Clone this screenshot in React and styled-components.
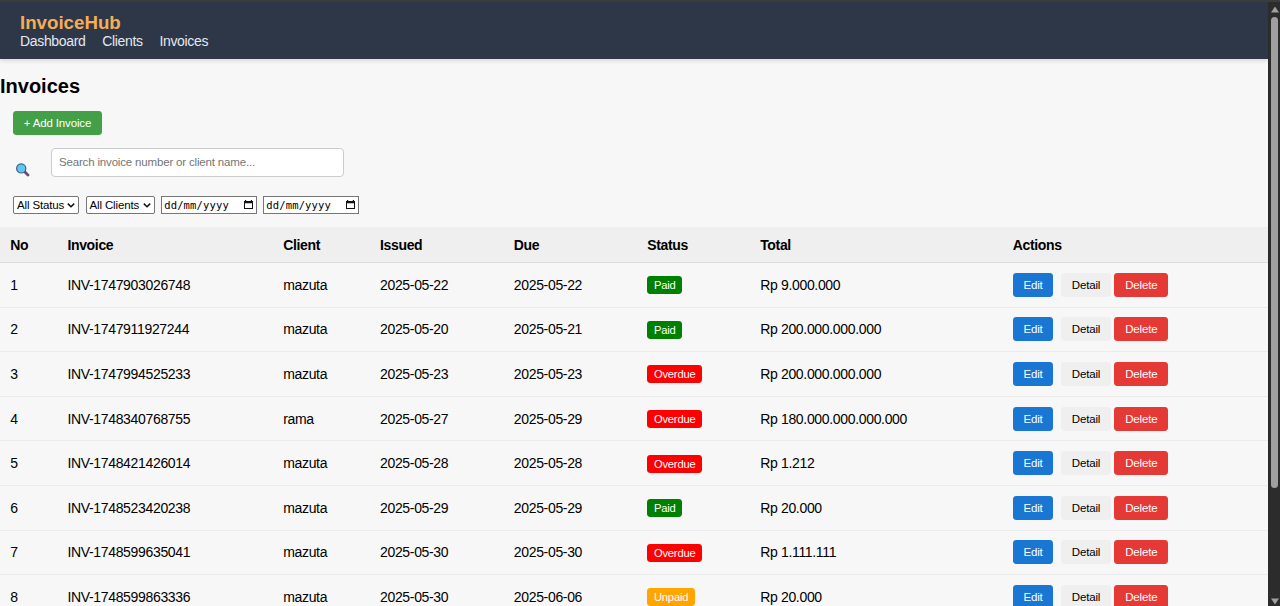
import React from "react";
import styled, { createGlobalStyle } from "styled-components";

const GlobalStyle = createGlobalStyle`
  * { box-sizing: border-box; }
  html, body { margin: 0; padding: 0; overflow: hidden; }
  body {
    font-family: "Liberation Sans", Arial, sans-serif;
    font-size: 14px;
    letter-spacing: -0.33px;
    color: #000;
    background: #f7f7f7;
  }
  button, input { font-family: inherit; }
`;

const Window = styled.div`
  display: flex;
  height: 606px;
  border-top: 2px solid #3c3c3c;
  overflow: hidden;
`;

const Page = styled.div`
  width: 1268px;
  flex: none;
  overflow: hidden;
  background: #f7f7f7;
`;

const Navbar = styled.header`
  height: 57px;
  padding: 10px 20px 0;
  background: #2d3748;
  box-shadow: 0 2px 4px rgba(0, 0, 0, 0.12);
`;

const Brand = styled.div`
  height: 21px;
  line-height: 21px;
  font-size: 18.7px;
  letter-spacing: 0;
  font-weight: bold;
  color: #f6ad55;
`;

const NavLinks = styled.nav`
  display: flex;
  gap: 16.7px;
  line-height: 16px;
`;

const NavLink = styled.a`
  color: #e2e8f0;
`;

const Title = styled.h2`
  margin: 16px 0 0;
  line-height: 23px;
  font-size: 20px;
  letter-spacing: 0;
`;

const Toolbar = styled.div`
  padding: 13px 13px 0;
  height: 129px;
`;

const variants = {
  add: "background: #43a047; color: #fff;",
  edit: "background: #1976d2; color: #fff; margin-right: 8px;",
  detail: "background: #efefef; color: #000; margin-right: 3.6px;",
  delete: "background: #e53935; color: #fff;",
};

const Button = styled.button`
  display: block;
  flex: none;
  width: ${(p) => p.$width}px;
  height: 24px;
  padding: 0;
  border: 0;
  border-radius: 3.4px;
  font-size: 11.5px;
  letter-spacing: -0.15px;
  line-height: 24px;
  text-align: center;
  ${(p) => variants[p.$kind]}
`;

const SearchRow = styled.div`
  display: flex;
  margin-top: 13px;
`;

const SearchIcon = styled.svg`
  width: 14px;
  height: 14px;
  margin: 15px 21px 0 3px;
`;

const SearchInput = styled.input`
  width: 293px;
  height: 29px;
  padding: 0 7px 1px;
  border: 1px solid #ccc;
  border-radius: 4px;
  background: #fff;
  font-size: 11.5px;
  letter-spacing: -0.17px;
  outline: none;
  &::placeholder { color: #757575; }
`;

const Filters = styled.div`
  display: flex;
  gap: 6.6px;
  margin-top: 19px;
`;

const Field = styled.div`
  display: flex;
  align-items: center;
  justify-content: space-between;
  width: ${(p) => p.$width}px;
  height: 18px;
  padding: 0 3px ${(p) => (p.$date ? 0 : 1)}px;
  border: 1px solid #767676;
  border-radius: ${(p) => (p.$date ? 0 : 2)}px;
  background: #fff;
  white-space: nowrap;
  font-family: ${(p) => (p.$date ? '"DejaVu Sans Mono", monospace' : "inherit")};
  font-size: ${(p) => (p.$date ? 10.5 : 11.5)}px;
  letter-spacing: ${(p) => (p.$date ? 0.15 : -0.15)}px;
  text-indent: ${(p) => (p.$date ? -1 : 0)}px;
  svg { flex: none; }
`;

const Table = styled.div`
  width: 1268px;
`;

const Row = styled.div`
  display: grid;
  grid-template-columns: 57.2px 215.8px 96.8px 133.8px 133.4px 113px 252.5px 1fr;
  align-items: center;
  height: ${(p) => (p.$head ? 36 : 44.6)}px;
  background: ${(p) => (p.$head ? "#efefef" : "transparent")};
  border-bottom: 1px solid ${(p) => (p.$head ? "#ddd" : "#ebebeb")};
  font-weight: ${(p) => (p.$head ? "bold" : "normal")};
`;

const Cell = styled.div`
  padding-left: 10.2px;
  line-height: 16px;
  white-space: nowrap;
`;

const badgeColors = { Paid: "#008000", Overdue: "#ff0000", Unpaid: "#ffa500" };

const Badge = styled.span`
  display: block;
  width: fit-content;
  height: 18px;
  margin-top: 0.8px;
  padding: 0 6.6px 0 6.8px;
  border-radius: 3.4px;
  background: ${(p) => badgeColors[p.$status]};
  color: #fff;
  font-size: 11.2px;
  letter-spacing: -0.2px;
  line-height: 18px;
`;

const Actions = styled.div`
  display: flex;
  padding-left: 10.3px;
`;

const Scrollbar = styled.div`
  display: flex;
  flex-direction: column;
  align-items: center;
  flex: 1;
  padding: 4px 0 1px 1px;
  background: #2c2c2c;
`;

const Arrow = styled.svg`
  width: 8px;
  height: 7px;
  flex: none;
  fill: #9f9f9f;
`;

const Track = styled.div`
  flex: 1;
  padding-top: 4px;
`;

const Thumb = styled.div`
  width: 7px;
  height: 471px;
  border-radius: 4px;
  background: #9f9f9f;
`;

const Chevron = () => (
  <svg width="8" height="6" viewBox="0 0 8 6" fill="none" stroke="#111" strokeWidth="1.5">
    <path d="M0.8 1.6 4 4.8 7.2 1.6" />
  </svg>
);

const Calendar = () => (
  <svg width="9" height="10" viewBox="0 0 9 10">
    <path d="M0 1h1V0h1.2v1h4.6V0H8v1h1v8H0zM1 3.2V8h7V3.2z" fill="#111" fillRule="evenodd" />
  </svg>
);

const invoices = [
  ["INV-1747903026748", "mazuta", "2025-05-22", "2025-05-22", "Paid", "Rp 9.000.000"],
  ["INV-1747911927244", "mazuta", "2025-05-20", "2025-05-21", "Paid", "Rp 200.000.000.000"],
  ["INV-1747994525233", "mazuta", "2025-05-23", "2025-05-23", "Overdue", "Rp 200.000.000.000"],
  ["INV-1748340768755", "rama", "2025-05-27", "2025-05-29", "Overdue", "Rp 180.000.000.000.000"],
  ["INV-1748421426014", "mazuta", "2025-05-28", "2025-05-28", "Overdue", "Rp 1.212"],
  ["INV-1748523420238", "mazuta", "2025-05-29", "2025-05-29", "Paid", "Rp 20.000"],
  ["INV-1748599635041", "mazuta", "2025-05-30", "2025-05-30", "Overdue", "Rp 1.111.111"],
  ["INV-1748599863336", "mazuta", "2025-05-30", "2025-06-06", "Unpaid", "Rp 20.000"],
];

const headings = ["No", "Invoice", "Client", "Issued", "Due", "Status", "Total", "Actions"];

export default function App() {
  return (
    <Window>
      <GlobalStyle />
      <Page>
        <Navbar>
          <Brand>InvoiceHub</Brand>
          <NavLinks>
            <NavLink>Dashboard</NavLink>
            <NavLink>Clients</NavLink>
            <NavLink>Invoices</NavLink>
          </NavLinks>
        </Navbar>
        <Title>Invoices</Title>
        <Toolbar>
          <Button $kind="add" $width={89}>+ Add Invoice</Button>
          <SearchRow>
            <SearchIcon viewBox="0 0 14 14">
              <path d="M9.2 9.2l2.8 2.9" stroke="#75467c" strokeWidth="2.8" strokeLinecap="round" />
              <circle cx="5.2" cy="5.4" r="4.6" fill="#5fc8f0" stroke="#40618f" strokeWidth="1.2" />
            </SearchIcon>
            <SearchInput placeholder="Search invoice number or client name..." />
          </SearchRow>
          <Filters>
            <Field $width={66}>All Status<Chevron /></Field>
            <Field $width={69}>All Clients<Chevron /></Field>
            <Field $date $width={95.5}>dd/mm/yyyy<Calendar /></Field>
            <Field $date $width={95.5}>dd/mm/yyyy<Calendar /></Field>
          </Filters>
        </Toolbar>
        <Table>
          <Row $head>
            {headings.map((h) => <Cell key={h}>{h}</Cell>)}
          </Row>
          {invoices.map(([id, client, issued, due, status, total], i) => (
            <Row key={id}>
              <Cell>{i + 1}</Cell>
              <Cell>{id}</Cell>
              <Cell>{client}</Cell>
              <Cell>{issued}</Cell>
              <Cell>{due}</Cell>
              <Cell><Badge $status={status}>{status}</Badge></Cell>
              <Cell>{total}</Cell>
              <Actions>
                <Button $kind="edit" $width={40.5}>Edit</Button>
                <Button $kind="detail" $width={49.5}>Detail</Button>
                <Button $kind="delete" $width={54}>Delete</Button>
              </Actions>
            </Row>
          ))}
        </Table>
      </Page>
      <Scrollbar>
        <Arrow viewBox="0 0 8 7"><path d="M4 .5 8 6.5H0z" /></Arrow>
        <Track><Thumb /></Track>
        <Arrow viewBox="0 0 8 7"><path d="M0 .5h8L4 6.5z" /></Arrow>
      </Scrollbar>
    </Window>
  );
}
